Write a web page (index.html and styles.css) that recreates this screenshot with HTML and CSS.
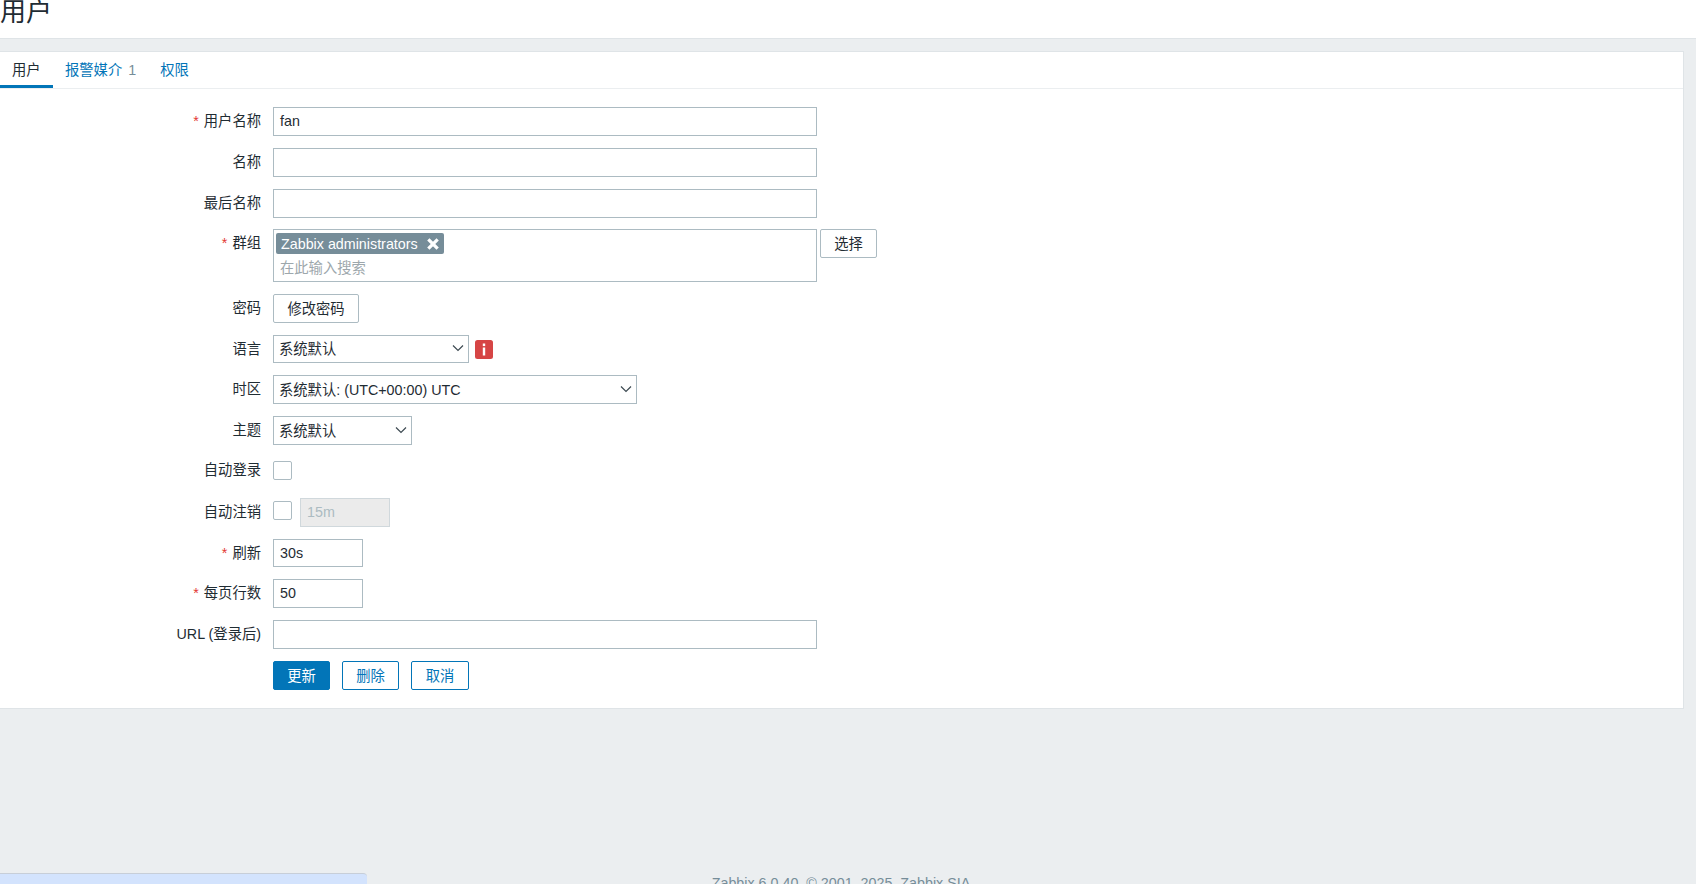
FILE: index.html
```html
<!DOCTYPE html>
<html lang="zh-CN">
<head>
<meta charset="utf-8">
<title>用户</title>
<link rel="stylesheet" href="styles.css">
</head>
<body>
<header class="page-header"><h1 class="page-title">用户</h1></header>
<main class="panel">
  <nav class="tabs">
    <a class="tab tab-active">用户</a>
    <a class="tab">报警媒介<span class="tab-count">1</span></a>
    <a class="tab">权限</a>
  </nav>
  <form class="form">
    <div class="row"><label class="label"><span class="req">*</span>用户名称</label><div class="ctl"><div class="field field-wide">fan</div></div></div>
    <div class="row"><label class="label">名称</label><div class="ctl"><div class="field field-wide"></div></div></div>
    <div class="row row-tight"><label class="label">最后名称</label><div class="ctl"><div class="field field-wide"></div></div></div>
    <div class="row row-group"><label class="label"><span class="req">*</span>群组</label>
      <div class="ctl ctl-top">
        <div class="multi">
          <span class="chip">Zabbix administrators
            <svg class="chip-x" viewBox="0 0 12 12"><path d="M2 2l8 8M10 2l-8 8"/></svg>
          </span>
          <span class="placeholder">在此输入搜索</span>
        </div>
        <button type="button" class="btn btn-select">选择</button>
      </div>
    </div>
    <div class="row"><label class="label">密码</label><div class="ctl"><button type="button" class="btn btn-pass">修改密码</button></div></div>
    <div class="row row-tight"><label class="label">语言</label><div class="ctl">
      <div class="select sel-lang">系统默认<svg class="chev" viewBox="0 0 12 8"><path d="M1 1.5l5 5 5-5"/></svg></div>
      <svg class="info" viewBox="0 0 18 19"><rect width="18" height="19" rx="2.5" fill="#d64545"/><rect x="7.8" y="3.5" width="2.4" height="2.6" fill="#fff"/><rect x="7.8" y="7.5" width="2.4" height="8" fill="#fff"/></svg>
    </div></div>
    <div class="row"><label class="label">时区</label><div class="ctl"><div class="select sel-tz">系统默认: (UTC+00:00) UTC<svg class="chev" viewBox="0 0 12 8"><path d="M1 1.5l5 5 5-5"/></svg></div></div></div>
    <div class="row"><label class="label">主题</label><div class="ctl"><div class="select sel-theme">系统默认<svg class="chev" viewBox="0 0 12 8"><path d="M1 1.5l5 5 5-5"/></svg></div></div></div>
    <div class="row row-check"><label class="label">自动登录</label><div class="ctl ctl-top"><span class="check"></span></div></div>
    <div class="row"><label class="label">自动注销</label><div class="ctl ctl-logout"><span class="check check-up"></span><div class="field field-off">15m</div></div></div>
    <div class="row row-short"><label class="label"><span class="req">*</span>刷新</label><div class="ctl"><div class="field field-short">30s</div></div></div>
    <div class="row"><label class="label"><span class="req">*</span>每页行数</label><div class="ctl"><div class="field field-short">50</div></div></div>
    <div class="row"><label class="label">URL (登录后)</label><div class="ctl"><div class="field field-wide"></div></div></div>
    <div class="row row-last"><span class="label"></span><div class="ctl ctl-actions">
      <button type="button" class="btn btn-primary">更新</button>
      <button type="button" class="btn btn-alt btn-del">删除</button>
      <button type="button" class="btn btn-alt btn-cancel">取消</button>
    </div></div>
  </form>
</main>
<footer class="footer">Zabbix 6.0.40. © 2001–2025, Zabbix SIA</footer>
<div class="download-bar"></div>
</body>
</html>
```
FILE: styles.css
```css
* { box-sizing: border-box; }
html, body { height: 100%; }
body {
  margin: 0;
  height: 884px;
  overflow: hidden;
  position: relative;
  background: #ebeef0;
  color: #1f2c33;
  font: 14.3px/18px "Liberation Sans", "Noto Sans CJK SC", sans-serif;
}
.page-header {
  height: 39px;
  background: #fff;
  border-bottom: 1px solid #dfe4e7;
}
.page-title {
  margin: 0;
  font-size: 26px;
  line-height: 24px;
  font-weight: 400;
}
.panel {
  margin: 12px 12px 0 0;
  height: 658px;
  background: #fff;
  border: 1px solid #dfe4e7;
  border-left: 0;
}
.tabs {
  display: flex;
  height: 37px;
  border-bottom: 1px solid #ebeef0;
}
.tab {
  display: block;
  height: 36px;
  padding: 9px 12px 0;
  color: #0275b8;
}
.tab-active {
  width: 53px;
  padding-left: 12px;
  color: #1f2c33;
  border-bottom: 3px solid #0275b8;
}
.tab-count { margin-left: 6px; color: #768d99; }
.form { padding-top: 18px; }
.row {
  display: flex;
  height: 29px;
  margin-bottom: 12px;
}
.row-tight { margin-bottom: 11px; }
.row-short { height: 28px; }
.row-group { height: 53px; }
.row-check { height: 19px; margin-top: 16px; margin-bottom: 18px; }
.row-last { margin-bottom: 0; }
.label {
  flex: none;
  width: 261px;
  margin-right: 12px;
  text-align: right;
  line-height: 28px;
}
.row-check .label { line-height: 19px; }
.req { color: #e33734; margin-right: 5px; }
.ctl { display: flex; align-items: center; }
.ctl-top { align-items: flex-start; }
.field {
  height: 29px;
  padding: 0 6px;
  line-height: 27px;
  background: #fff;
  border: 1px solid #acbbc2;
}
.row-short .field { height: 28px; line-height: 26px; }
.field-wide { width: 544px; }
.field-short { width: 90px; }
.field-off {
  width: 90px;
  margin-left: 8px;
  color: #acbbc2;
  background: #ebebeb;
  border-color: #d0d8dc;
}
.multi {
  position: relative;
  width: 544px;
  height: 53px;
  padding: 3px 2px;
  border: 1px solid #acbbc2;
}
.chip {
  display: inline-flex;
  align-items: center;
  justify-content: space-between;
  width: 168px;
  height: 21px;
  padding: 0 4px 0 5px;
  color: #fff;
  background: #768d99;
  border-radius: 2px;
}
.chip-x {
  width: 14px;
  height: 14px;
  fill: none;
  stroke: #fff;
  stroke-width: 2.8;
}
.placeholder {
  display: block;
  margin: 5px 0 0 4px;
  color: #9da7ac;
}
.btn {
  height: 29px;
  padding: 0;
  font: inherit;
  color: #1f2c33;
  background: #fff;
  border: 1px solid #acbbc2;
  border-radius: 2px;
}
.btn-select { width: 57px; margin-left: 3px; }
.btn-pass { width: 86px; }
.btn-primary {
  width: 57px;
  color: #fff;
  background: #0275b8;
  border-color: #0275b8;
}
.btn-alt { color: #0275b8; border-color: #0275b8; }
.btn-del { width: 57px; margin-left: 12px; }
.btn-cancel { width: 58px; margin-left: 12px; }
.select {
  display: flex;
  align-items: center;
  justify-content: space-between;
  height: 29px;
  padding: 0 4px 0 5px;
  line-height: 26px;
  background: #fff;
  border: 1px solid #acbbc2;
}
.sel-lang { width: 196px; height: 28px; margin-bottom: 1px; }
.sel-tz { width: 364px; }
.sel-theme { width: 139px; }
.chev {
  width: 12px;
  height: 8px;
  margin-top: -2px;
  fill: none;
  stroke: #3d4a52;
  stroke-width: 1.2;
}
.info { width: 18px; height: 19px; margin-left: 6px; }
.check {
  display: block;
  width: 19px;
  height: 19px;
  background: #fff;
  border: 1px solid #acbbc2;
  border-radius: 2px;
}
.check-up { margin-top: -4px; }
.footer {
  margin-top: 165px;
  height: 18px;
  padding-right: 14px;
  text-align: center;
  font-size: 14.3px;
  line-height: 18px;
  color: #768d99;
  white-space: nowrap;
}
.download-bar {
  position: absolute;
  left: 0;
  bottom: 0;
  width: 367px;
  height: 11px;
  background: #d3e3fd;
  border-top: 1px solid #c7ced8;
  border-top-right-radius: 4px;
}
```
